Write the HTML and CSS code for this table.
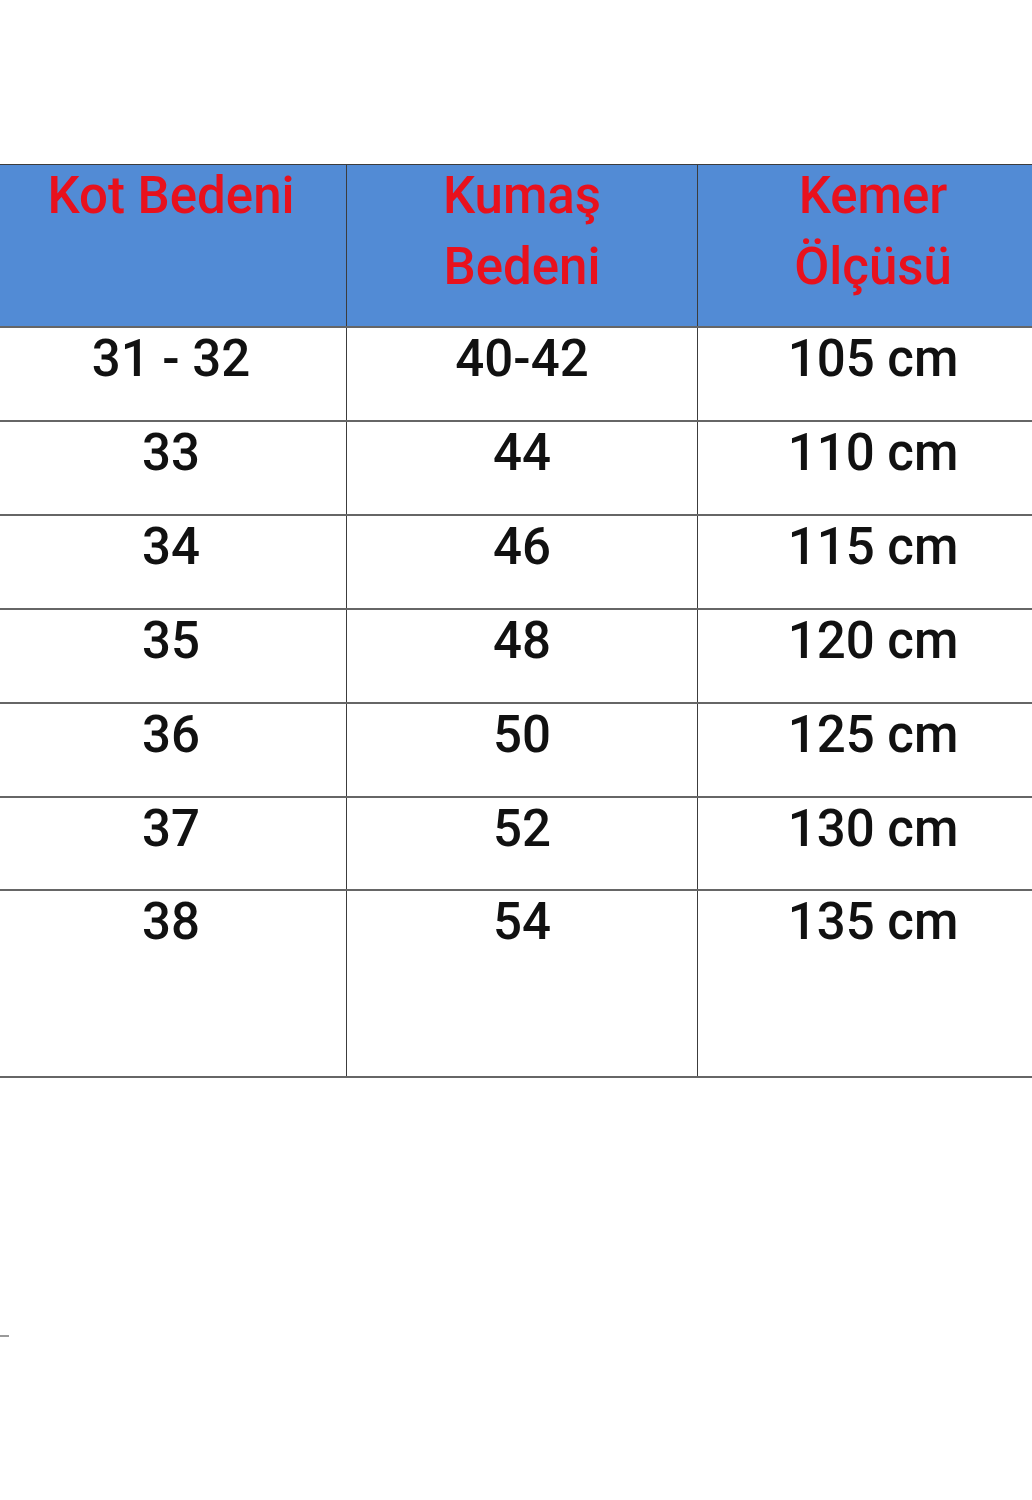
FILE: index.html
```html
<!DOCTYPE html>
<html lang="tr">
<head>
<meta charset="utf-8">
<title>Beden Tablosu</title>
<link rel="stylesheet" href="styles.css">
</head>
<body>
<div class="page">
  <table class="sizes">
    <thead>
      <tr class="head">
        <th><div class="hd">Kot Bedeni</div></th>
        <th><div class="hd">Kumaş<br>Bedeni</div></th>
        <th><div class="hd">Kemer<br>Ölçüsü</div></th>
      </tr>
    </thead>
    <tbody>
      <tr><td>31 - 32</td><td>40-42</td><td>105 cm</td></tr>
      <tr><td>33</td><td>44</td><td>110 cm</td></tr>
      <tr><td>34</td><td>46</td><td>115 cm</td></tr>
      <tr><td>35</td><td>48</td><td>120 cm</td></tr>
      <tr><td>36</td><td>50</td><td>125 cm</td></tr>
      <tr class="short"><td>37</td><td>52</td><td>130 cm</td></tr>
      <tr class="last"><td>38</td><td>54</td><td>135 cm</td></tr>
    </tbody>
  </table>
  <div class="mark"></div>
</div>
</body>
</html>
```

FILE: styles.css
```css
html, body {
  margin: 0;
  padding: 0;
  background: #ffffff;
  overflow: hidden;
}
.page {
  width: 1032px;
  height: 1500px;
  overflow: hidden;
  padding-top: 164px;
  box-sizing: border-box;
  font-family: Roboto, "Liberation Sans", sans-serif;
}
.sizes {
  border-collapse: collapse;
  table-layout: fixed;
  width: 1050px;
  margin-left: -5px;
}
.sizes th, .sizes td {
  width: 350px;
  border: 1px solid #3c3c3c;
  text-align: center;
  vertical-align: top;
  padding: 0;
}
.sizes th {
  background: #528bd5;
  color: #e8111d;
  font-weight: 500;
  font-size: 51px;
  line-height: 71px;
  height: 161px;
}
.hd {
  margin-top: -5px;
}
.sizes td {
  color: #111;
  font-weight: 500;
  font-size: 51px;
  line-height: 59px;
  height: 94px;
  padding-top: 1px;
  box-sizing: border-box;
  border-top: 2px solid #666;
}
.sizes tr.short td { height: 93px; }
.sizes tr.last td { height: 187px; border-bottom: 2px solid #666; }
.mark {
  width: 9px;
  height: 2px;
  background: #9a9a9a;
  margin-top: 257px;
}
```
